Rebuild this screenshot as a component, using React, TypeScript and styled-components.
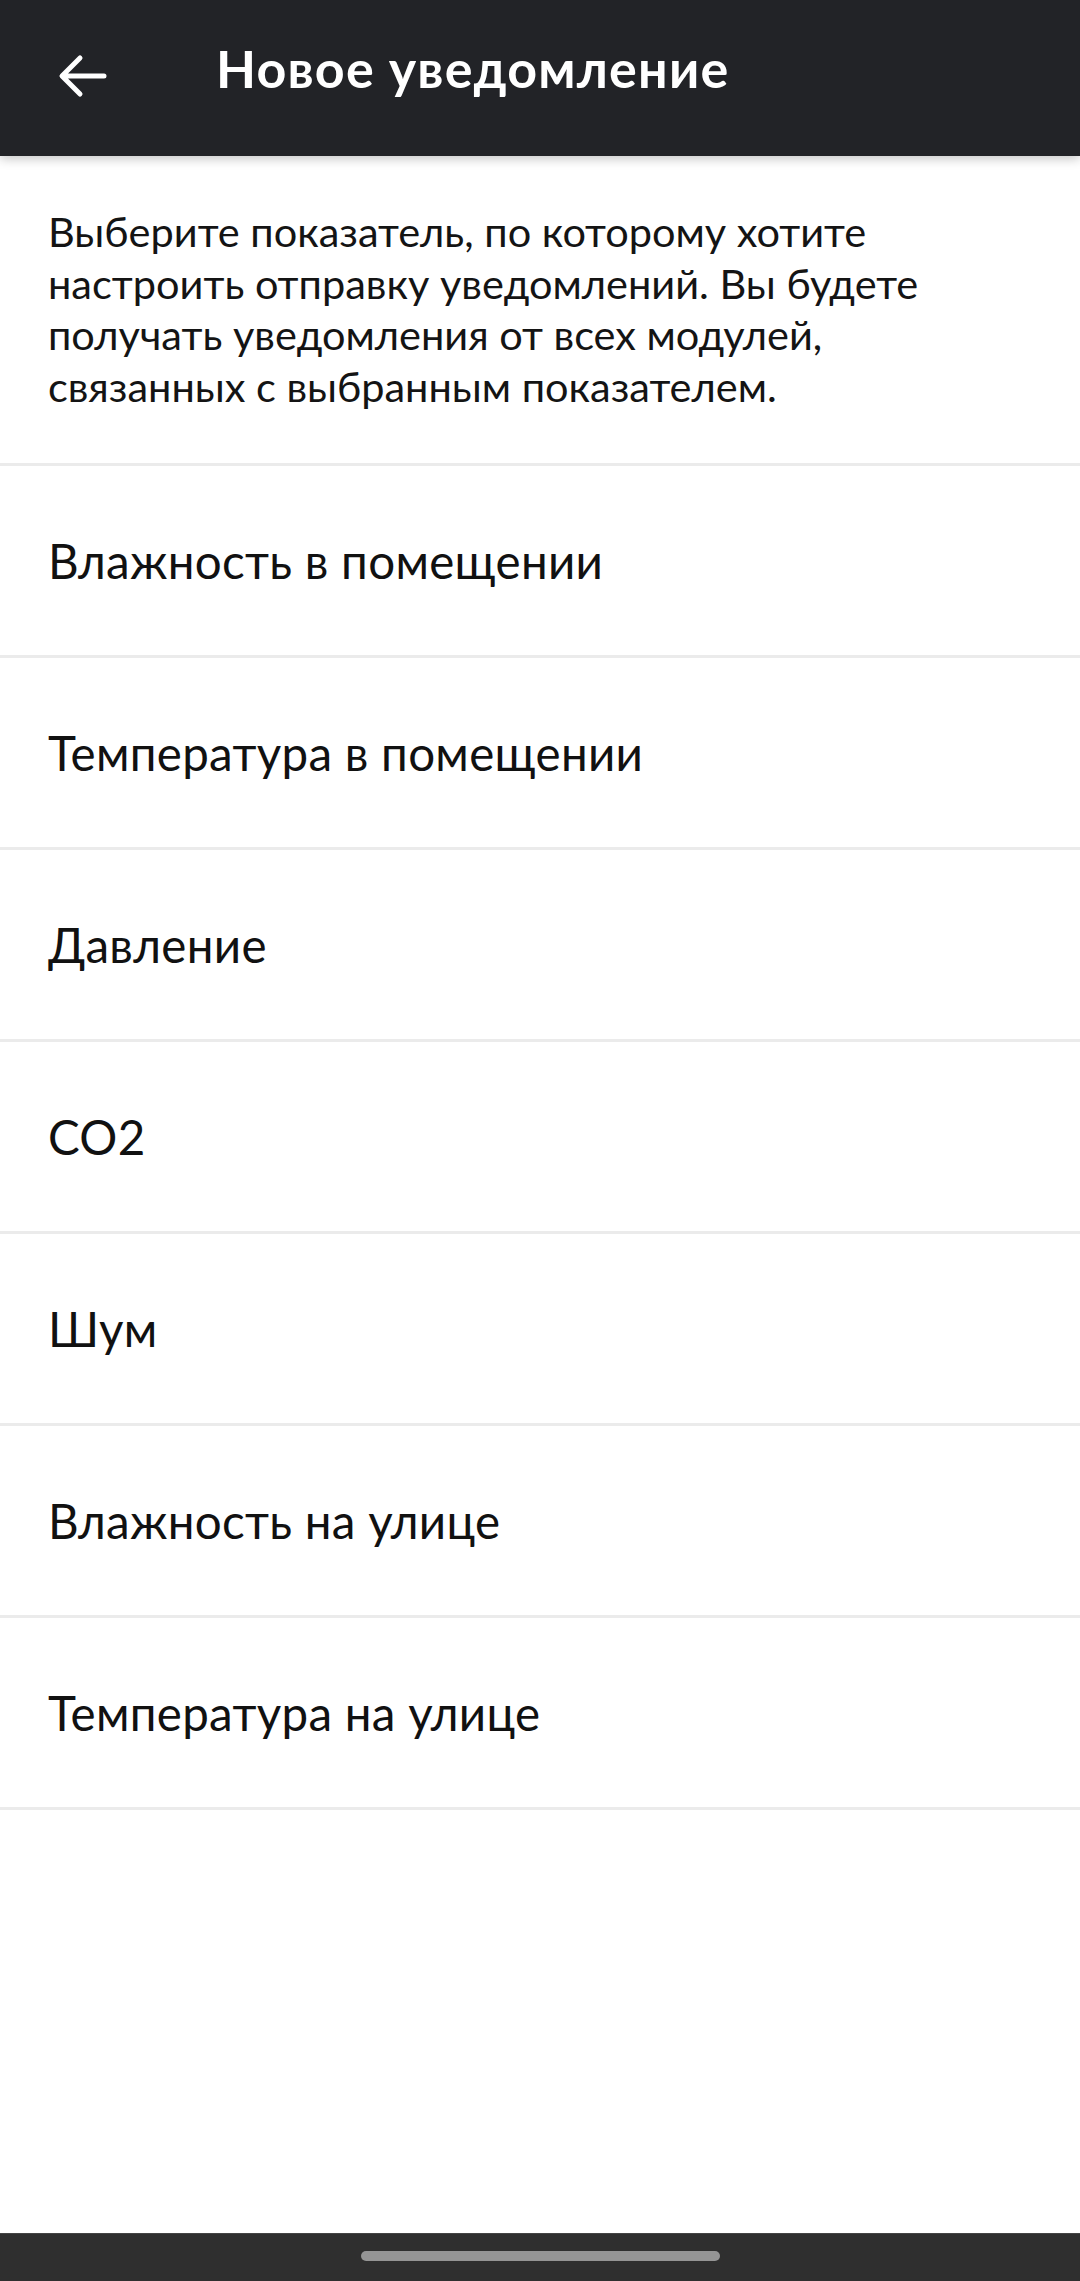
import React from 'react';
import styled, { createGlobalStyle } from 'styled-components';

const GlobalStyle = createGlobalStyle`
  html, body {
    margin: 0;
    padding: 0;
    background: #ffffff;
  }
  body {
    font-family: Lato, 'Open Sans', 'Liberation Sans', sans-serif;
    -webkit-font-smoothing: antialiased;
  }
  * {
    box-sizing: border-box;
  }
`;

const Screen = styled.div`
  width: 1080px;
  min-height: 2281px;
  display: flex;
  flex-direction: column;
  background: #ffffff;
`;

const TopBar = styled.header`
  height: 156px;
  flex-shrink: 0;
  display: flex;
  align-items: center;
  padding: 0 0 20px 58px;
  background: #222327;
  box-shadow: 0 3px 10px rgba(0, 0, 0, 0.22);
  position: relative;
  z-index: 1;
`;

const BackButton = styled.button`
  width: 50px;
  height: 44px;
  margin-top: 16px;
  padding: 0;
  border: none;
  background: transparent;
  display: flex;
  align-items: center;
  justify-content: center;
  cursor: pointer;
`;

const Title = styled.h1`
  margin: 0 0 0 108px;
  color: #ffffff;
  font-size: 52px;
  font-weight: 700;
  letter-spacing: 1.2px;
  line-height: 1;
`;

const Content = styled.main`
  flex: 1;
  display: flex;
  flex-direction: column;
`;

const Intro = styled.p`
  margin: 0;
  padding: 50px 20px 51px 48px;
  color: #141414;
  font-size: 41.5px;
  line-height: 51.5px;
  border-bottom: 3px solid #ebebeb;
`;

const OptionList = styled.ul`
  margin: 0;
  padding: 0;
  list-style: none;
`;

const OptionRow = styled.li`
  height: 192px;
  display: flex;
  align-items: center;
  padding: 0 48px;
  color: #111111;
  font-size: 47.5px;
  letter-spacing: 0.3px;
  border-bottom: 3px solid #ebebeb;
  cursor: pointer;
`;

const NavBar = styled.footer`
  height: 48px;
  flex-shrink: 0;
  display: flex;
  justify-content: center;
  padding-top: 17px;
  background: #2f2f2f;
  border-top: 1px solid #454545;
`;

const HomePill = styled.div`
  width: 359px;
  height: 10px;
  border-radius: 5px;
  background: #959595;
`;

const BackArrow = () => (
  <svg width="50" height="44" viewBox="0 0 50 44" fill="none">
    <path
      d="M46 22H6M22 4L4 22L22 40"
      stroke="#ffffff"
      strokeWidth="5"
      strokeLinecap="round"
      strokeLinejoin="round"
    />
  </svg>
);

const options = [
  'Влажность в помещении',
  'Температура в помещении',
  'Давление',
  'CO2',
  'Шум',
  'Влажность на улице',
  'Температура на улице',
];

const App = () => {
  return (
    <>
      <GlobalStyle />
      <Screen>
        <TopBar>
          <BackButton aria-label="Назад">
            <BackArrow />
          </BackButton>
          <Title>Новое уведомление</Title>
        </TopBar>
        <Content>
          <Intro>
            Выберите показатель, по которому хотите
            <br />
            настроить отправку уведомлений. Вы будете
            <br />
            получать уведомления от всех модулей,
            <br />
            связанных с выбранным показателем.
          </Intro>
          <OptionList>
            {options.map(option => (
              <OptionRow key={option}>{option}</OptionRow>
            ))}
          </OptionList>
        </Content>
        <NavBar>
          <HomePill />
        </NavBar>
      </Screen>
    </>
  );
};

export default App;
